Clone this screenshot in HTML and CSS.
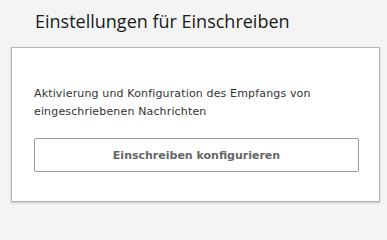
FILE: index.html
```html
<!DOCTYPE html>
<html lang="de">
<head>
<meta charset="utf-8">
<link rel="stylesheet" href="styles.css">
</head>
<body>
<div class="page">
  <h1 class="title">Einstellungen für Einschreiben</h1>
  <section class="card">
    <p class="desc">Aktivierung und Konfiguration des Empfangs von eingeschriebenen Nachrichten</p>
    <button class="btn" type="button">Einschreiben konfigurieren</button>
  </section>
</div>
</body>
</html>
```
FILE: styles.css
```css
html, body {
  margin: 0;
  padding: 0;
  background: #f4f4f4;
}
.page {
  width: 387px;
  height: 212px;
  padding: 0 0 0 11px;
  box-sizing: border-box;
}
.title {
  margin: 0;
  padding: 9px 0 0 24px;
  height: 37px;
  box-sizing: border-box;
  font-family: "Open Sans", sans-serif;
  font-weight: 400;
  font-size: 18px;
  line-height: 25px;
  color: #1a1a1a;
}
.card {
  width: 369px;
  height: 155px;
  box-sizing: border-box;
  margin-top: 10px;
  background: #fff;
  border: 1px solid #b4b4b4;
  box-shadow: 0 1px 2px rgba(0,0,0,0.2);
  padding: 37px 20px 0 22px;
  display: flex;
  flex-direction: column;
}
.desc {
  margin: 0;
  font-family: "DejaVu Sans", Verdana, sans-serif;
  font-size: 11px;
  letter-spacing: 0.15px;
  line-height: 18px;
  color: #333;
}
.btn {
  margin-top: 17px;
  width: 325px;
  height: 34px;
  background: #fff;
  border: 1px solid #9a9a9a;
  border-radius: 2px;
  font-family: "DejaVu Sans", Verdana, sans-serif;
  font-weight: bold;
  font-size: 11px;
  color: #666;
  padding: 0;
}
```
